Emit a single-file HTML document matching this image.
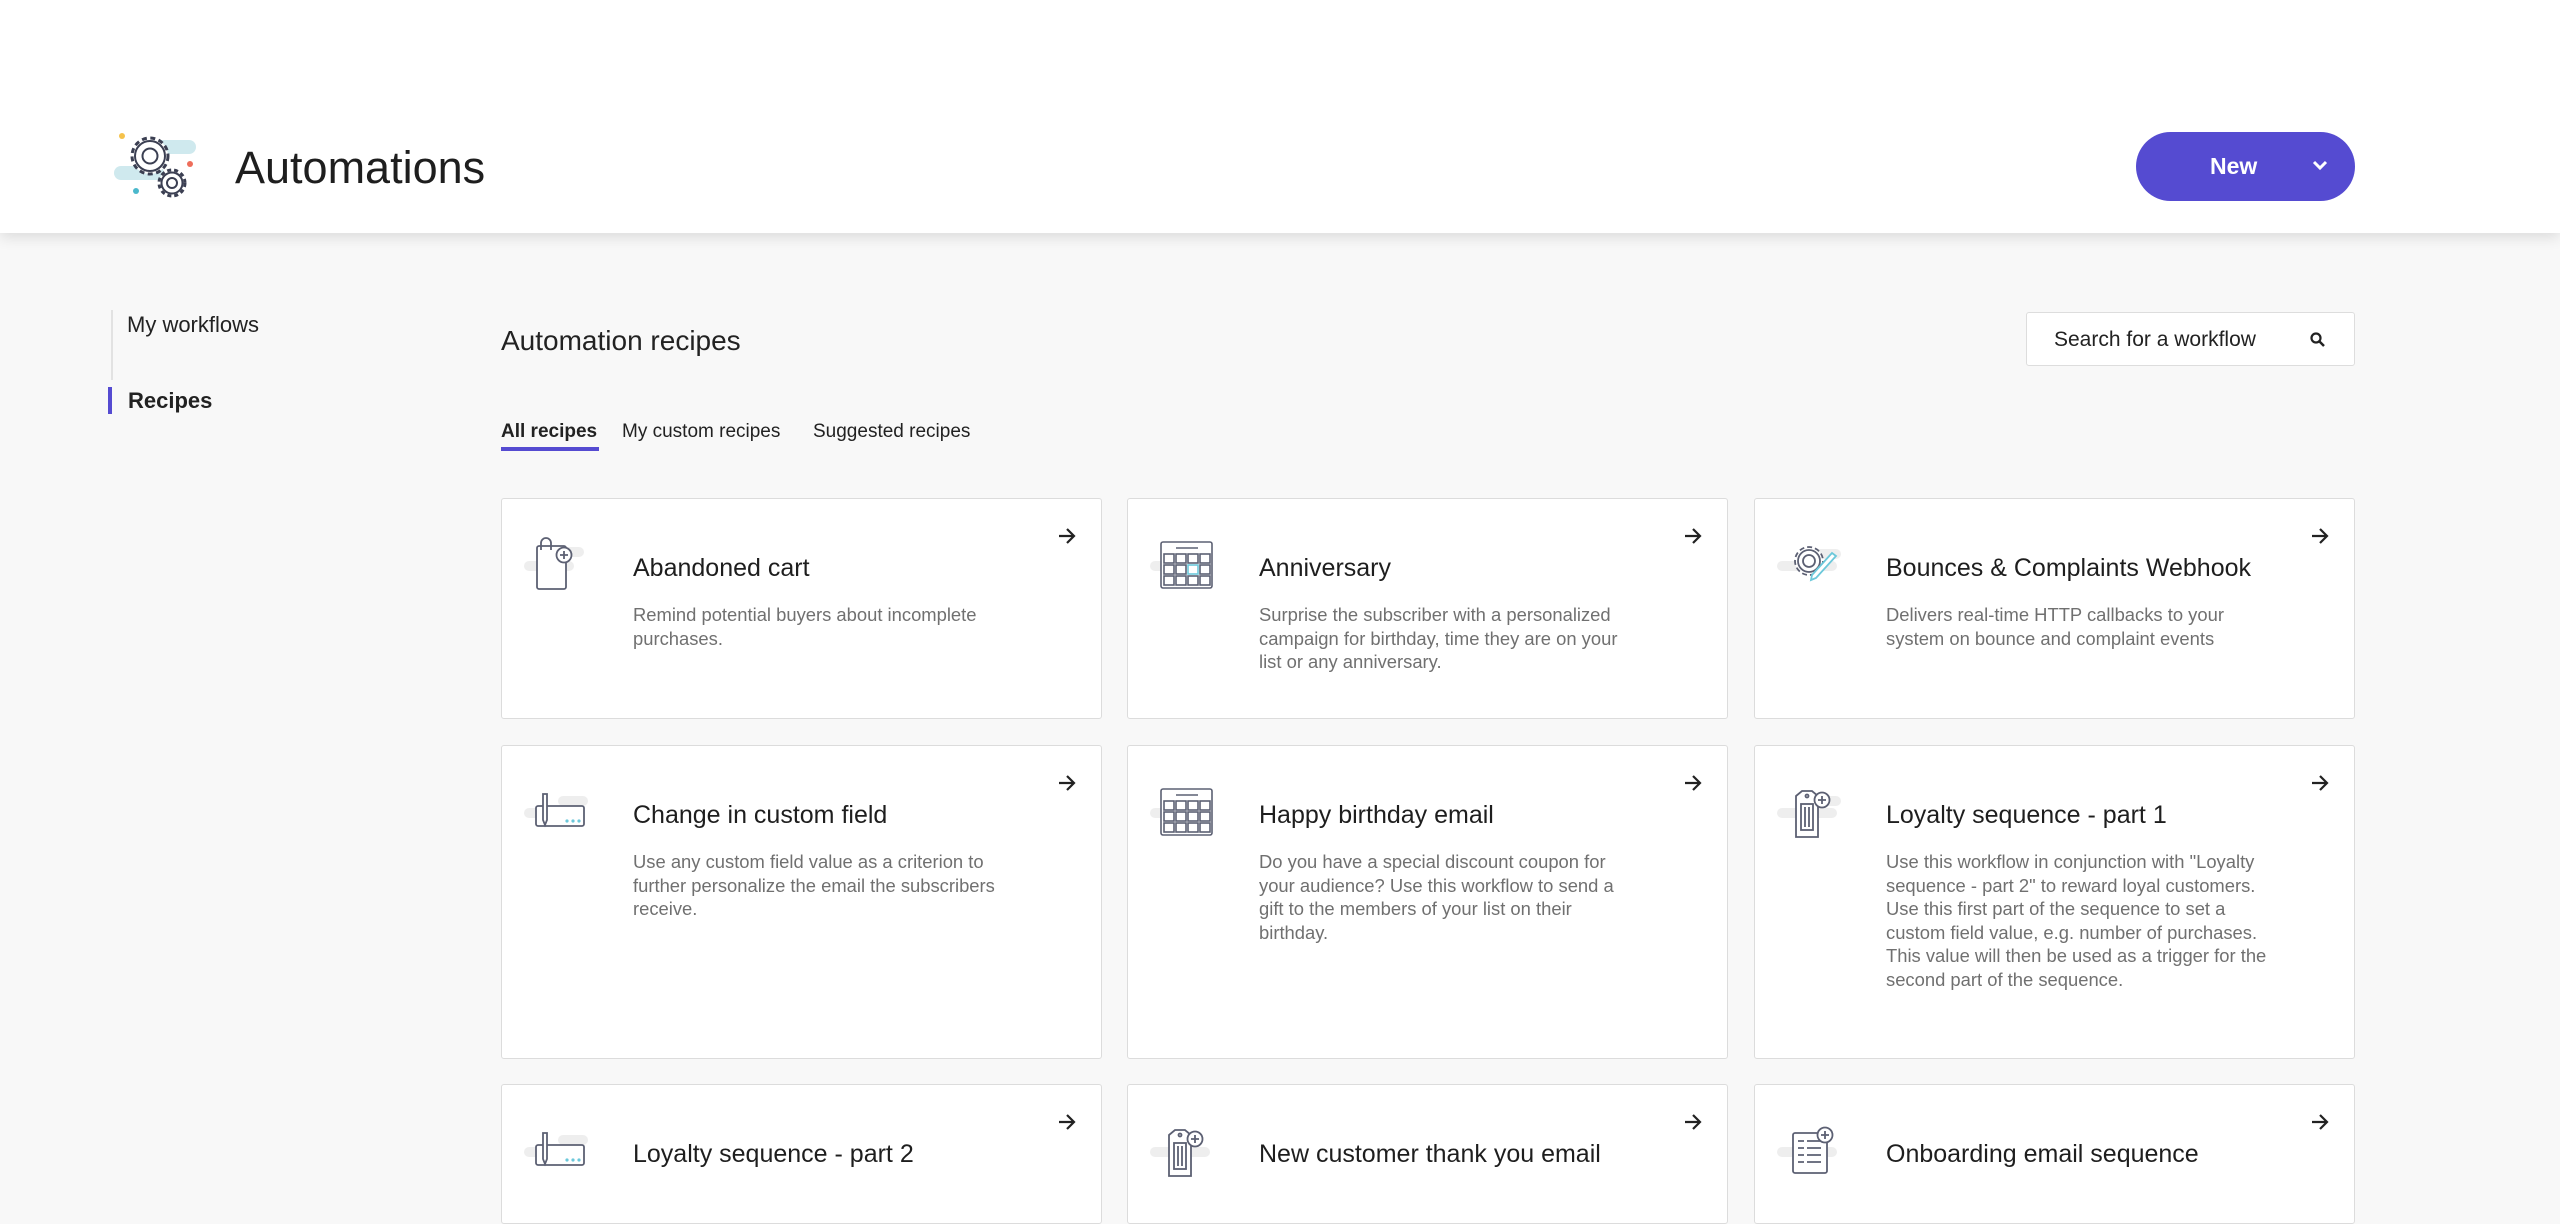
<!DOCTYPE html>
<html><head><meta charset="utf-8"><style>
*{box-sizing:border-box;margin:0;padding:0}
body{width:2560px;height:1187px;overflow:hidden;background:#f8f8f8;font-family:"Liberation Sans",sans-serif;color:#222;position:relative}
.hdr{position:absolute;left:0;top:0;width:2560px;height:233px;background:#fff;box-shadow:0 4px 14px rgba(0,0,0,.12)}
.title{position:absolute;left:235px;top:138px;font-size:45px;line-height:60px;color:#1e1e1e}
.new{position:absolute;left:2136px;top:132px;width:219px;height:69px;border-radius:35px;background:#554bd1;color:#fff;font-weight:bold;font-size:23px}
.new span{position:absolute;left:74px;top:21px}
.side{position:absolute;left:111px;top:310px;width:2px;height:70px;background:#e2e2e2}
.s1{position:absolute;left:127px;top:312px;font-size:22px}
.s2{position:absolute;left:128px;top:388px;font-size:22px;font-weight:bold}
.bar{position:absolute;left:108px;top:387px;width:4px;height:27px;background:#554bd1}
.h2{position:absolute;left:501px;top:325px;font-size:28px;color:#222}
.search{position:absolute;left:2026px;top:312px;width:329px;height:54px;background:#fff;border:1px solid #ddd;border-radius:3px;font-size:21px;padding:15px 0 0 27px;color:#222}
.tabs{position:absolute;top:421px;font-size:19px}
.card{position:absolute;width:601px;background:#fff;border:1.5px solid #dcdcdc;border-radius:3px}
.card h3{position:absolute;left:131px;top:55px;font-size:25px;font-weight:normal;color:#1e1e1e}
.card p{position:absolute;left:131px;top:104px;width:382px;font-size:18.4px;line-height:23.5px;color:#707070}
.card .ar{position:absolute;right:24px;top:28px}
.card svg.ic{position:absolute;left:22px;top:38px}
</style></head><body>
<div class="hdr">
<svg style="position:absolute;left:112px;top:126px" width="90" height="76" viewBox="0 0 90 76">
<rect x="34" y="14" width="50" height="14" rx="7" fill="#cfe9ee"/><rect x="2" y="40" width="50" height="14" rx="7" fill="#cfe9ee"/><rect x="50" y="52" width="22" height="14" rx="7" fill="#cfe9ee"/>
<circle cx="10" cy="10" r="3" fill="#f5c24b"/><circle cx="78" cy="38" r="3" fill="#ee6d5a"/><circle cx="24" cy="65" r="3" fill="#4bb8cc"/>
<g fill="#fff" stroke="#3b3f52" stroke-width="2"><circle cx="38" cy="30" r="18" stroke-dasharray="5 3.5" stroke-width="3"/><circle cx="38" cy="30" r="15"/><circle cx="38" cy="30" r="7.5"/>
<circle cx="60" cy="57" r="13" stroke-dasharray="4 3" stroke-width="3"/><circle cx="60" cy="57" r="10.5"/><circle cx="60" cy="57" r="5"/></g>
</svg>
<div class="title">Automations</div>
<div class="new"><span>New</span><svg style="position:absolute;left:176px;top:28px" width="16" height="12" viewBox="0 0 16 12"><path d="M2 2l6 6 6-6" stroke="#fff" stroke-width="3" fill="none"/></svg></div>
</div>
<div class="side"></div><div class="s1">My workflows</div><div class="bar"></div><div class="s2">Recipes</div>
<div class="h2">Automation recipes</div>
<div class="search">Search for a workflow<svg style="position:absolute;left:282px;top:18px" width="18" height="18" viewBox="0 0 18 18"><circle cx="7" cy="7" r="4.5" stroke="#222" stroke-width="2.2" fill="none"/><path d="M10.5 10.5l4.5 4.5" stroke="#222" stroke-width="2.5"/></svg></div>
<div class="tabs" style="left:501px;font-weight:bold">All recipes</div>
<div style="position:absolute;left:501px;top:447px;width:98px;height:4px;background:#554bd1"></div>
<div class="tabs" style="left:622px">My custom recipes</div>
<div class="tabs" style="left:813px">Suggested recipes</div>

<div class="card" style="left:501px;top:498px;height:221px">
<svg class="ic" width="80" height="60" viewBox="0 0 80 60"><rect x="0" y="24" width="50" height="10" rx="5" fill="#eee"/><rect x="20" y="10" width="40" height="10" rx="5" fill="#eee"/>
<g stroke="#5c6073" stroke-width="1.8" fill="#fff"><rect x="13" y="9" width="29" height="43" rx="2"/><path d="M17 13v-7a5 5 0 0 1 10 0v7" fill="none"/><circle cx="40" cy="18" r="7.5"/><path d="M40 14v8M36 18h8"/></g></svg>
<h3>Abandoned cart</h3><p>Remind potential buyers about incomplete purchases.</p>
<svg class="ar" width="20" height="18" viewBox="0 0 20 18"><path d="M2 9h15M10 2l7 7-7 7" stroke="#222" stroke-width="2.2" fill="none"/></svg></div>

<div class="card" style="left:1127px;top:498px;height:221px">
<svg class="ic" width="80" height="60" viewBox="0 0 80 60"><rect x="0" y="24" width="60" height="10" rx="5" fill="#eee"/><g stroke="#5c6073" stroke-width="1.6" fill="#fff"><rect x="11" y="5" width="51" height="46" rx="2"/><path d="M26 11h22"/>
<g fill="none"><rect x="14" y="17" width="10" height="9"/><rect x="26" y="17" width="10" height="9"/><rect x="38" y="17" width="10" height="9"/><rect x="50" y="17" width="10" height="9"/><rect x="14" y="28" width="10" height="9"/><rect x="26" y="28" width="10" height="9"/><rect x="50" y="28" width="10" height="9"/><rect x="14" y="39" width="10" height="9"/><rect x="26" y="39" width="10" height="9"/><rect x="38" y="39" width="10" height="9"/><rect x="50" y="39" width="10" height="9"/></g></g><rect x="38" y="28" width="10" height="9" fill="none" stroke="#6cc8da" stroke-width="1.6"/></svg>
<h3>Anniversary</h3><p>Surprise the subscriber with a personalized campaign for birthday, time they are on your list or any anniversary.</p>
<svg class="ar" width="20" height="18" viewBox="0 0 20 18"><path d="M2 9h15M10 2l7 7-7 7" stroke="#222" stroke-width="2.2" fill="none"/></svg></div>

<div class="card" style="left:1754px;top:498px;height:221px">
<svg class="ic" width="80" height="60" viewBox="0 0 80 60"><rect x="0" y="24" width="60" height="10" rx="5" fill="#eee"/><rect x="30" y="12" width="34" height="10" rx="5" fill="#eee"/><g fill="#fff" stroke="#5c6073" stroke-width="1.8"><circle cx="32" cy="24" r="14" stroke-dasharray="5 3"/><circle cx="32" cy="24" r="11"/><circle cx="32" cy="24" r="6"/></g><path d="M35 38l20-22 4 3-20 22-5 2z" fill="#fff" stroke="#6cc8da" stroke-width="1.8"/></svg>
<h3>Bounces &amp; Complaints Webhook</h3><p>Delivers real-time HTTP callbacks to your system on bounce and complaint events</p>
<svg class="ar" width="20" height="18" viewBox="0 0 20 18"><path d="M2 9h15M10 2l7 7-7 7" stroke="#222" stroke-width="2.2" fill="none"/></svg></div>

<div class="card" style="left:501px;top:745px;height:314px">
<svg class="ic" width="80" height="60" viewBox="0 0 80 60"><rect x="0" y="24" width="60" height="10" rx="5" fill="#eee"/><rect x="34" y="12" width="30" height="10" rx="5" fill="#eee"/><g stroke="#5c6073" stroke-width="1.8" fill="#fff"><rect x="12" y="22" width="48" height="20" rx="2"/><path d="M19 10v26l2 5 2-5v-26z"/></g><g fill="#6cc8da"><circle cx="43" cy="37" r="1.6"/><circle cx="49" cy="37" r="1.6"/><circle cx="55" cy="37" r="1.6"/></g></svg>
<h3>Change in custom field</h3><p>Use any custom field value as a criterion to further personalize the email the subscribers receive.</p>
<svg class="ar" width="20" height="18" viewBox="0 0 20 18"><path d="M2 9h15M10 2l7 7-7 7" stroke="#222" stroke-width="2.2" fill="none"/></svg></div>

<div class="card" style="left:1127px;top:745px;height:314px">
<svg class="ic" width="80" height="60" viewBox="0 0 80 60"><rect x="0" y="24" width="60" height="10" rx="5" fill="#eee"/><g stroke="#5c6073" stroke-width="1.6" fill="#fff"><rect x="11" y="5" width="51" height="46" rx="2"/><path d="M26 11h22"/>
<g fill="none"><rect x="14" y="17" width="10" height="9"/><rect x="26" y="17" width="10" height="9"/><rect x="38" y="17" width="10" height="9"/><rect x="50" y="17" width="10" height="9"/><rect x="14" y="28" width="10" height="9"/><rect x="26" y="28" width="10" height="9"/><rect x="38" y="28" width="10" height="9"/><rect x="50" y="28" width="10" height="9"/><rect x="14" y="39" width="10" height="9"/><rect x="26" y="39" width="10" height="9"/><rect x="38" y="39" width="10" height="9"/><rect x="50" y="39" width="10" height="9"/></g></g></svg>
<h3>Happy birthday email</h3><p>Do you have a special discount coupon for your audience? Use this workflow to send a gift to the members of your list on their birthday.</p>
<svg class="ar" width="20" height="18" viewBox="0 0 20 18"><path d="M2 9h15M10 2l7 7-7 7" stroke="#222" stroke-width="2.2" fill="none"/></svg></div>

<div class="card" style="left:1754px;top:745px;height:314px">
<svg class="ic" width="80" height="60" viewBox="0 0 80 60"><rect x="0" y="24" width="60" height="10" rx="5" fill="#eee"/><rect x="34" y="12" width="30" height="10" rx="5" fill="#eee"/><g stroke="#5c6073" stroke-width="1.8" fill="#fff"><path d="M19 12l6-5h10l6 5v41h-22z"/><rect x="24" y="20" width="12" height="26"/><path d="M28 23v20M32 23v20" fill="none"/><circle cx="30" cy="12" r="1.5"/><circle cx="45" cy="16" r="7.5"/><path d="M45 12v8M41 16h8"/></g></svg>
<h3>Loyalty sequence - part 1</h3><p>Use this workflow in conjunction with "Loyalty sequence - part 2" to reward loyal customers. Use this first part of the sequence to set a custom field value, e.g. number of purchases. This value will then be used as a trigger for the second part of the sequence.</p>
<svg class="ar" width="20" height="18" viewBox="0 0 20 18"><path d="M2 9h15M10 2l7 7-7 7" stroke="#222" stroke-width="2.2" fill="none"/></svg></div>

<div class="card" style="left:501px;top:1084px;height:140px">
<svg class="ic" width="80" height="60" viewBox="0 0 80 60"><rect x="0" y="24" width="60" height="10" rx="5" fill="#eee"/><rect x="34" y="12" width="30" height="10" rx="5" fill="#eee"/><g stroke="#5c6073" stroke-width="1.8" fill="#fff"><rect x="12" y="22" width="48" height="20" rx="2"/><path d="M19 10v26l2 5 2-5v-26z"/></g><g fill="#6cc8da"><circle cx="43" cy="37" r="1.6"/><circle cx="49" cy="37" r="1.6"/><circle cx="55" cy="37" r="1.6"/></g></svg>
<h3>Loyalty sequence - part 2</h3>
<svg class="ar" width="20" height="18" viewBox="0 0 20 18"><path d="M2 9h15M10 2l7 7-7 7" stroke="#222" stroke-width="2.2" fill="none"/></svg></div>

<div class="card" style="left:1127px;top:1084px;height:140px">
<svg class="ic" width="80" height="60" viewBox="0 0 80 60"><rect x="0" y="24" width="60" height="10" rx="5" fill="#eee"/><g stroke="#5c6073" stroke-width="1.8" fill="#fff"><path d="M19 12l6-5h10l6 5v41h-22z"/><rect x="24" y="20" width="12" height="26"/><path d="M28 23v20M32 23v20" fill="none"/><circle cx="30" cy="12" r="1.5"/><circle cx="45" cy="16" r="7.5"/><path d="M45 12v8M41 16h8"/></g></svg>
<h3>New customer thank you email</h3>
<svg class="ar" width="20" height="18" viewBox="0 0 20 18"><path d="M2 9h15M10 2l7 7-7 7" stroke="#222" stroke-width="2.2" fill="none"/></svg></div>

<div class="card" style="left:1754px;top:1084px;height:140px">
<svg class="ic" width="80" height="60" viewBox="0 0 80 60"><rect x="0" y="24" width="60" height="10" rx="5" fill="#eee"/><g stroke="#5c6073" stroke-width="1.8" fill="#fff"><rect x="16" y="10" width="34" height="40" rx="2"/><path d="M21 18h6M30 18h14M21 25h6M30 25h14M21 32h6M30 32h14M21 39h6M30 39h14" fill="none"/><circle cx="48" cy="12" r="7.5"/><path d="M48 8v8M44 12h8"/></g></svg>
<h3>Onboarding email sequence</h3>
<svg class="ar" width="20" height="18" viewBox="0 0 20 18"><path d="M2 9h15M10 2l7 7-7 7" stroke="#222" stroke-width="2.2" fill="none"/></svg></div>
</body></html>
